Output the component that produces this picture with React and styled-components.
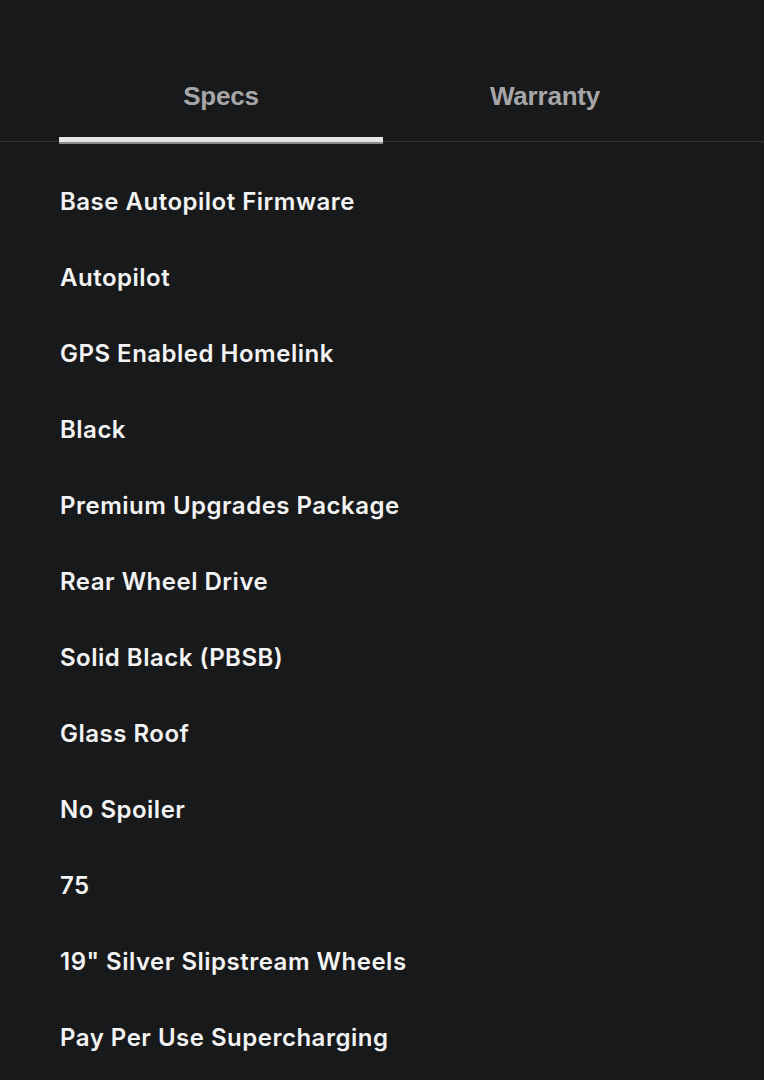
import React from 'react';
import styled, { createGlobalStyle } from 'styled-components';

const GlobalStyle = createGlobalStyle`
  html, body {
    margin: 0;
    background: #18191b;
  }
  body {
    font-family: Inter, "Noto Sans", sans-serif;
    -webkit-font-smoothing: antialiased;
  }
`;

const Page = styled.div`
  box-sizing: border-box;
  height: 1080px;
  overflow: hidden;
  background: #18191b;
  padding-top: 63px;
`;

const TabBar = styled.div`
  display: flex;
  padding: 0 57px 0 59px;
  border-bottom: 1px solid #34353a;
`;

const Tab = styled.button`
  flex: 1;
  background: none;
  border: none;
  padding: 18px 0 29px;
  font-family: "Liberation Sans", Arial, sans-serif;
  font-size: 26px;
  font-weight: 700;
  color: #a6a6a8;
  letter-spacing: -0.2px;
  position: relative;
  cursor: pointer;

  &::after {
    content: '';
    display: ${(p) => (p.$active ? 'block' : 'none')};
    position: absolute;
    left: 0;
    right: 0;
    bottom: -3px;
    height: 5px;
    background: #e6e6e6;
    border-bottom: 2px solid #8a8a8c;
  }
`;

const List = styled.ul`
  list-style: none;
  margin: 0;
  padding: 45px 0 0 60px;
  display: flex;
  flex-direction: column;
  gap: 47px;
`;

const Item = styled.li`
  font-size: 24px;
  line-height: 29px;
  font-weight: 600;
  color: #f3f3f3;
  letter-spacing: 0.5px;
`;

const specs = [
  'Base Autopilot Firmware',
  'Autopilot',
  'GPS Enabled Homelink',
  'Black',
  'Premium Upgrades Package',
  'Rear Wheel Drive',
  'Solid Black (PBSB)',
  'Glass Roof',
  'No Spoiler',
  '75',
  '19" Silver Slipstream Wheels',
  'Pay Per Use Supercharging',
];

export default function App() {
  return (
    <Page>
      <GlobalStyle />
      <TabBar>
        <Tab $active>Specs</Tab>
        <Tab>Warranty</Tab>
      </TabBar>
      <List>
        {specs.map((s) => (
          <Item key={s}>{s}</Item>
        ))}
      </List>
    </Page>
  );
}
